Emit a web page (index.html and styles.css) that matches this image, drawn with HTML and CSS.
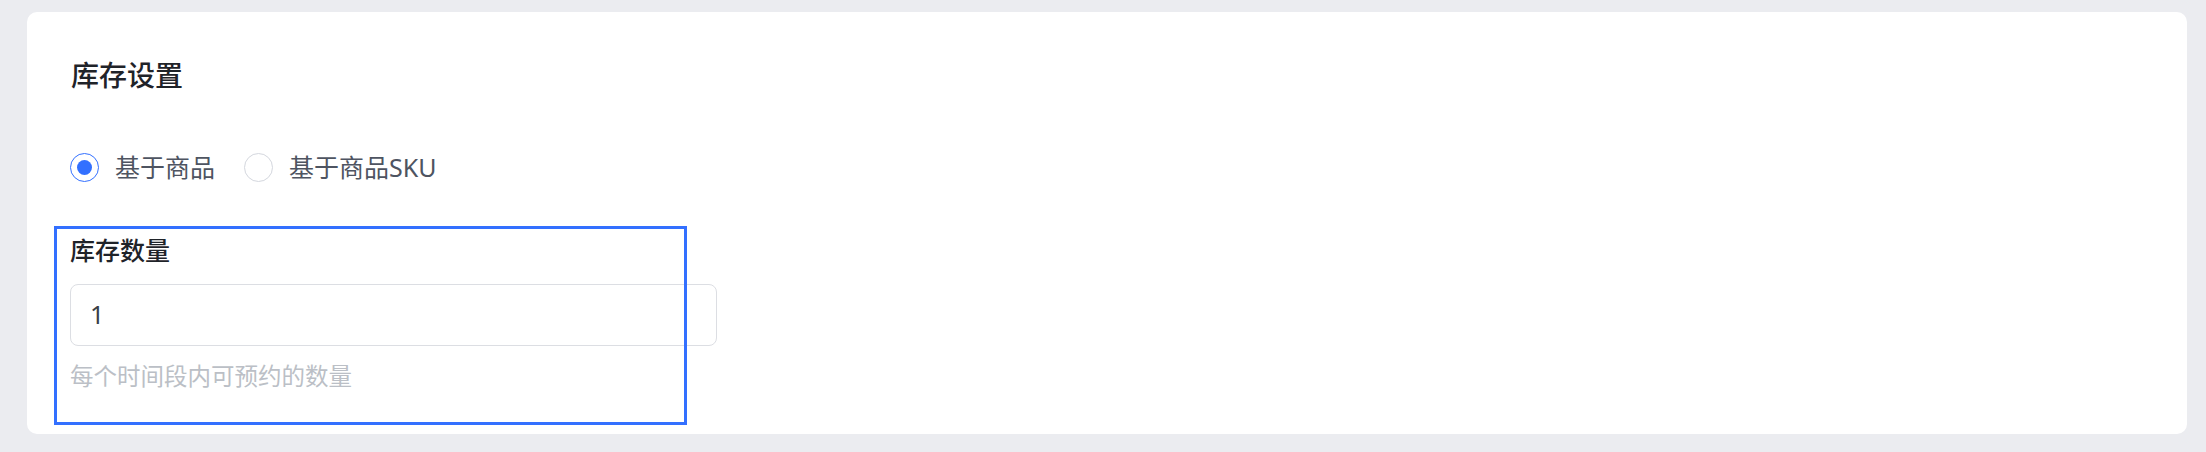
FILE: index.html
```html
<!DOCTYPE html>
<html lang="zh-CN">
<head>
<meta charset="utf-8">
<title>库存设置</title>
<link rel="stylesheet" href="styles.css">
</head>
<body>
<div class="page">
  <section class="card">
    <h2 class="card-title">库存设置</h2>
    <div class="radio-group">
      <label class="radio checked">
        <span class="radio-dot"></span>
        <span class="radio-text">基于商品</span>
      </label>
      <label class="radio">
        <span class="radio-dot"></span>
        <span class="radio-text">基于商品SKU</span>
      </label>
    </div>
    <div class="form-item">
      <div class="form-label">库存数量</div>
      <div class="input">1</div>
      <div class="form-help">每个时间段内可预约的数量</div>
      <div class="highlight"></div>
    </div>
  </section>
</div>
</body>
</html>
```

FILE: styles.css
```css
* { box-sizing: border-box; }
html, body {
  margin: 0;
  padding: 0;
  background: #ebecf0;
  font-family: "Noto Sans", "Noto Sans CJK SC", sans-serif;
}
.page {
  padding: 12px 19px 18px 27px;
}
.card {
  background: #ffffff;
  border-radius: 10px;
  height: 422px;
  padding: 43px 43px 0 43px;
}
.card-title {
  margin: 0;
  font-size: 28px;
  line-height: 40px;
  font-weight: 500;
  color: #1f2329;
  padding-left: 1px;
}
.radio-group {
  display: flex;
  align-items: center;
  margin-top: 52px;
  height: 40px;
  gap: 29px;
}
.radio {
  display: flex;
  align-items: center;
  gap: 16px;
}
.radio-dot {
  width: 29px;
  height: 29px;
  border-radius: 50%;
  border: 1.5px solid #d4d7de;
  display: flex;
  align-items: center;
  justify-content: center;
}
.radio.checked .radio-dot {
  border-color: #3370ff;
}
.radio.checked .radio-dot::after {
  content: "";
  width: 15px;
  height: 15px;
  border-radius: 50%;
  background: #3370ff;
}
.radio-text {
  font-size: 25px;
  line-height: 36px;
  color: #4e5461;
}
.form-item {
  position: relative;
  margin-top: 45px;
}
.form-label {
  font-size: 25px;
  line-height: 36px;
  font-weight: 500;
  color: #1f2329;
}
.input {
  margin-top: 16px;
  width: 647px;
  height: 62px;
  border: 1.5px solid #dcdee3;
  border-radius: 8px;
  padding-left: 19px;
  font-size: 25px;
  line-height: 59px;
  color: #3a3f47;
}
.form-help {
  margin-top: 13px;
  font-size: 23.5px;
  line-height: 34px;
  color: #bbbfc6;
}
.highlight {
  position: absolute;
  left: -16px;
  top: -6px;
  width: 633px;
  height: 199px;
  border: 3px solid #3370ff;
  pointer-events: none;
}
```
